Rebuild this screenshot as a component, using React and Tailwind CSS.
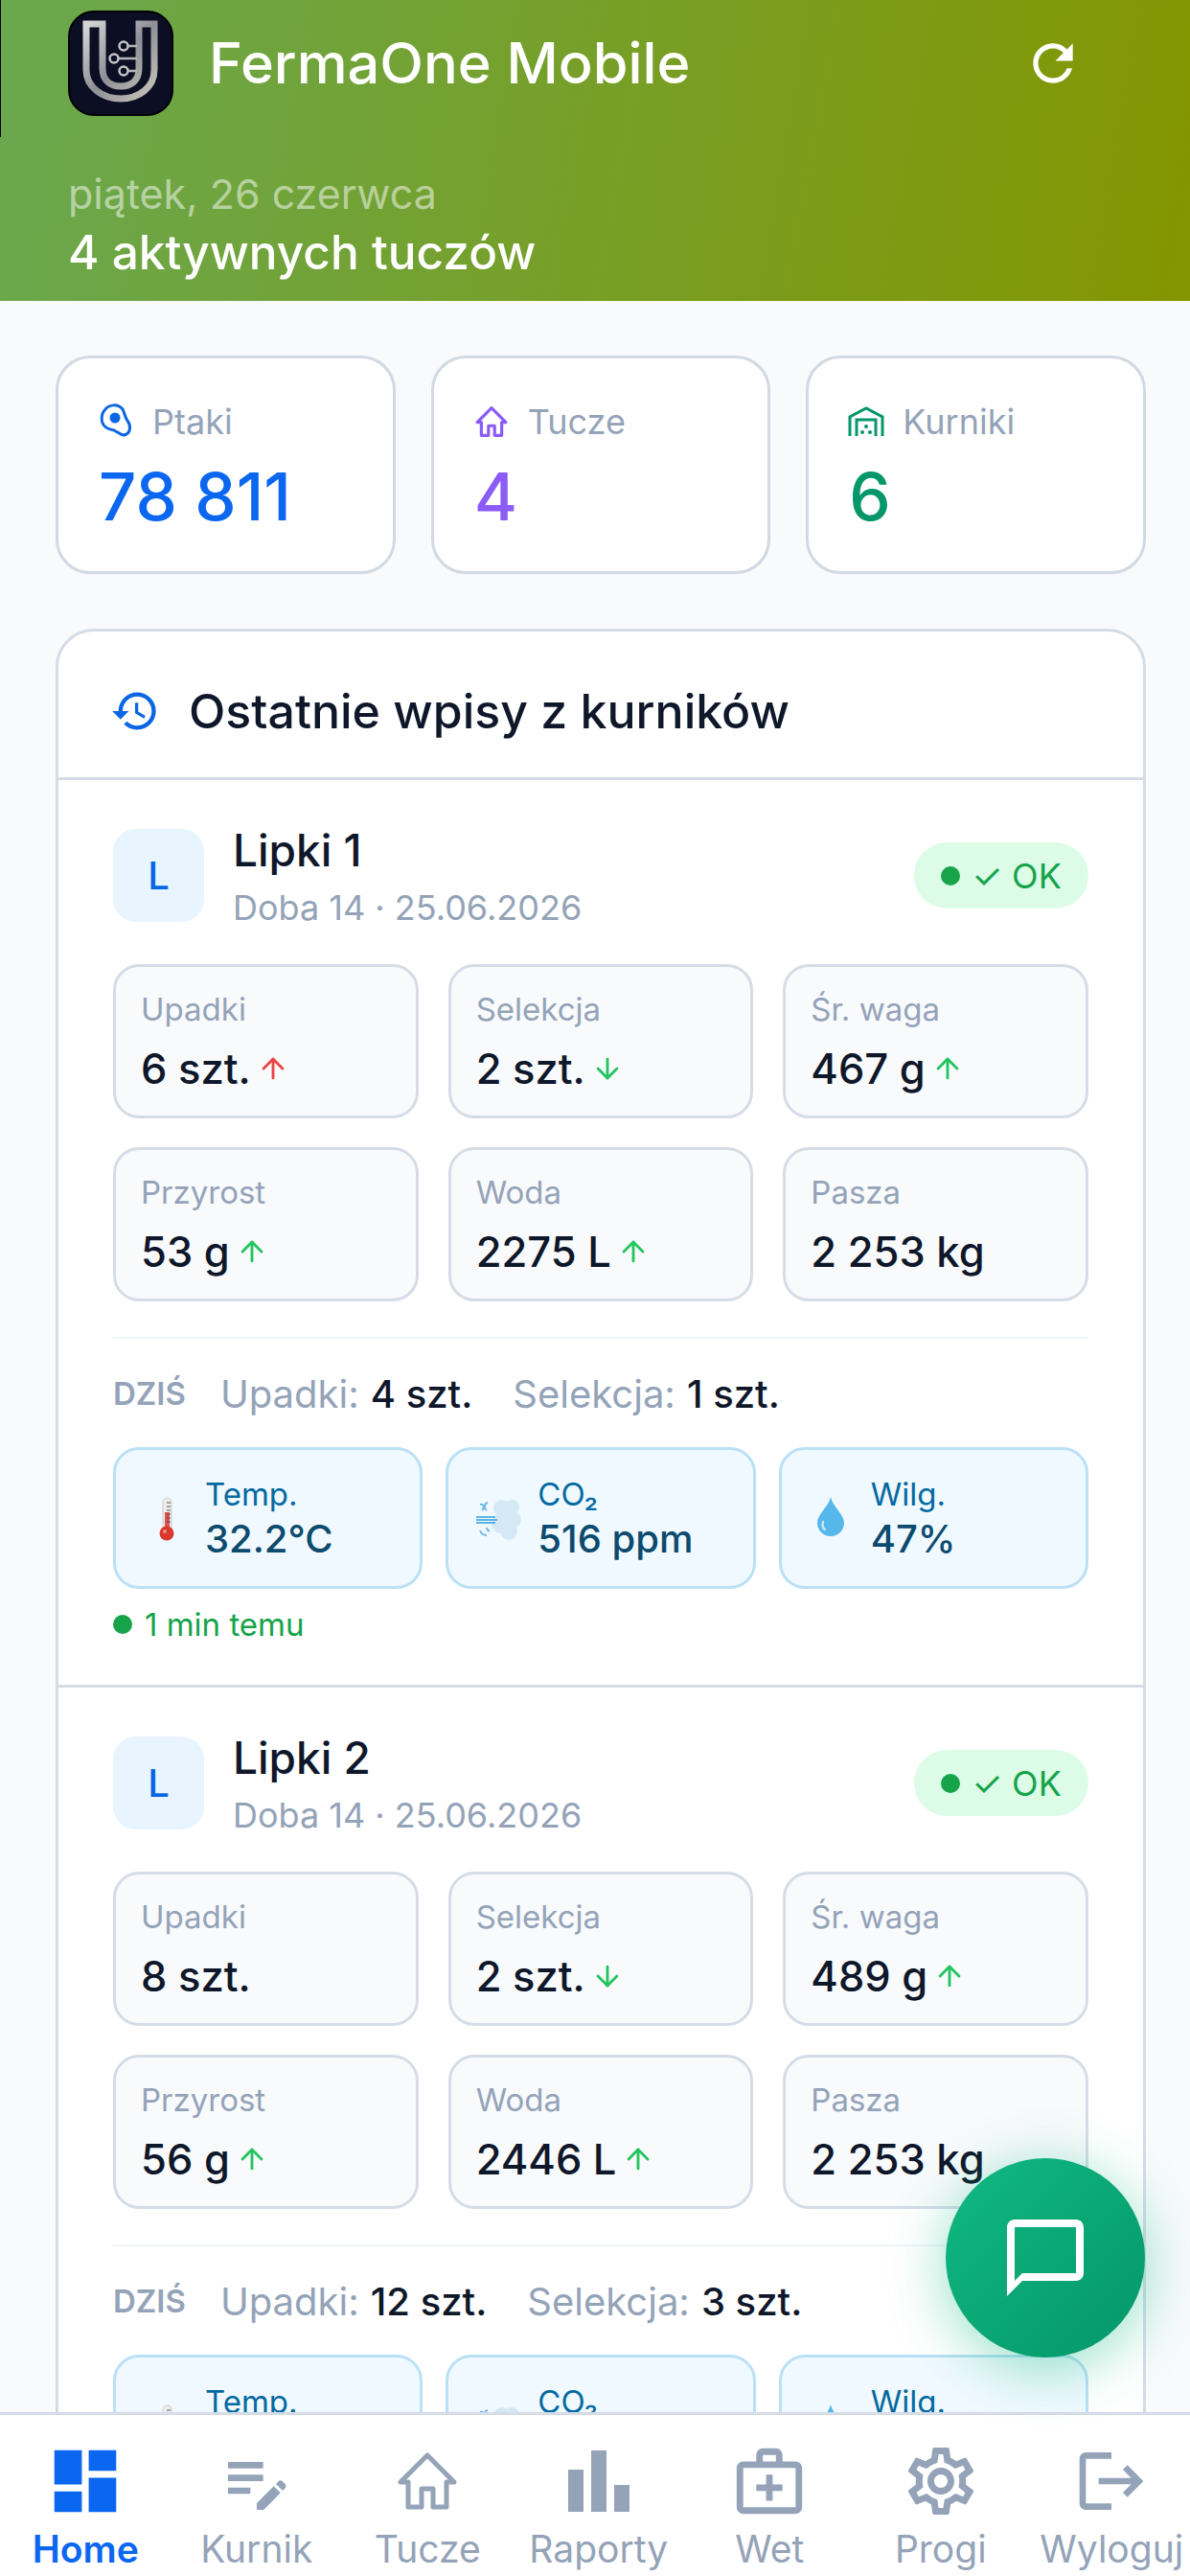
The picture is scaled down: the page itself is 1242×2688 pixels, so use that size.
import { MdDashboard, MdEditNote, MdBarChart, MdOutlineMedicalServices, MdOutlineSettings, MdLogout, MdRefresh, MdHistory, MdOutlineChatBubbleOutline } from "react-icons/md";
import { ArrowUp, ArrowDown } from "lucide-react";

const Logo = () => (
  <svg viewBox="0 0 110 110" className="w-[110px] h-[110px] shrink-0">
    <defs>
      <linearGradient id="silver" x1="0" y1="0" x2="1" y2="1">
        <stop offset="0" stopColor="#d6d6d6" />
        <stop offset="0.5" stopColor="#8f9096" />
        <stop offset="1" stopColor="#c9c5bc" />
      </linearGradient>
    </defs>
    <rect x="1" y="1" width="108" height="108" rx="26" fill="#0c0f24" stroke="#000" strokeWidth="2" />
    <path d="M19 14H36V60C36 73 44 79 55 79C66 79 74 73 74 60V14H90V62C90 80 74 92 55 92C36 92 19 80 19 62Z" fill="none" stroke="url(#silver)" strokeWidth="7" />
    <path d="M58 37H72M48 50H72M58 63H72" stroke="#b5b5b8" strokeWidth="2.5" fill="none" />
    <circle cx="58" cy="37" r="4.5" fill="#0c0f24" stroke="#c4c4c6" strokeWidth="2.5" />
    <circle cx="48" cy="50" r="4.5" fill="#0c0f24" stroke="#c4c4c6" strokeWidth="2.5" />
    <circle cx="58" cy="63" r="4.5" fill="#0c0f24" stroke="#c4c4c6" strokeWidth="2.5" />
  </svg>
);

const Egg = () => (
  <svg viewBox="0 0 36 38" className="w-[36px] h-[38px] shrink-0 text-[#0b66e4]">
    <path d="M7 6C11 1 20 0 25 6C27 9 27 14 30 18C34 23 33 30 29 32C25 35 20 30 16 28C10 27 5 25 3.5 19C2.5 14 4 9 7 6Z" fill="none" stroke="currentColor" strokeWidth="3" />
    <circle cx="17" cy="15" r="5.5" fill="currentColor" />
  </svg>
);

const House = ({ className, strokeWidth = 3 }) => (
  <svg viewBox="0 0 64 60" className={className}>
    <path d="M32 3L4 31H12V57H26V38H38V57H52V31H60Z" fill="none" stroke="currentColor" strokeWidth={strokeWidth} strokeLinejoin="round" />
  </svg>
);

const Barn = () => (
  <svg viewBox="0 0 38 32" className="w-[38px] h-[32px] shrink-0 text-[#059669]">
    <path d="M2 31V11L19 2L36 11V31" fill="none" stroke="currentColor" strokeWidth="3" />
    <path d="M9 31V14H29V31" fill="none" stroke="currentColor" strokeWidth="3" />
    <circle cx="19" cy="21" r="2" fill="currentColor" />
    <circle cx="15" cy="27" r="2" fill="currentColor" />
    <circle cx="23" cy="27" r="2" fill="currentColor" />
  </svg>
);

const Thermometer = () => (
  <svg viewBox="0 0 56 48" className="w-[56px] h-[48px] shrink-0">
    <rect x="24" y="3" width="9" height="38" rx="4.5" fill="#f1eded" stroke="#cfc9c9" />
    <rect x="26" y="18" width="5" height="22" fill="#d9534a" />
    <path d="M28 8h4M28 12h4M28 16h4M28 20h4M28 24h4M28 28h4" stroke="#55555a" strokeWidth="1.2" />
    <circle cx="28" cy="40" r="7.5" fill="#d8392c" />
    <circle cx="26" cy="38" r="2" fill="#ef8f86" />
  </svg>
);

const WindCloud = () => (
  <svg viewBox="0 0 56 48" className="w-[56px] h-[48px] shrink-0">
    <g fill="#d5e8f5">
      <circle cx="31" cy="14" r="9" />
      <circle cx="41" cy="13" r="8" />
      <circle cx="43" cy="26" r="8" />
      <circle cx="38" cy="38" r="9" />
      <circle cx="29" cy="31" r="9" />
      <circle cx="34" cy="24" r="10" />
    </g>
    <path d="M4 23H24M4 26H26M4 29H24" stroke="#5cb4e6" strokeWidth="2.2" fill="none" />
    <path d="M8 10c4-1 5 3 2 6M16 8c-4 1-4 6-1 8M8 37c1 3 4 5 7 5M15 34c0 2 1 3 3 4" stroke="#6fbbe8" strokeWidth="2" fill="none" />
  </svg>
);

const Drop = () => (
  <svg viewBox="0 0 56 48" className="w-[56px] h-[48px] shrink-0">
    <path d="M26 2C24 12 12 20 12 29a14 14 0 0 0 28 0C40 20 28 12 26 2Z" fill="#55b7ea" />
    <path d="M18 28c-1 4 0 7 2 8" stroke="#c6e8f9" strokeWidth="2.5" fill="none" strokeLinecap="round" />
  </svg>
);

const Stat = ({ icon, label, value, color }) => (
  <div className="flex-1 h-[228px] bg-white border-[3px] border-[#d1d9e3] rounded-[36px] pl-[42px] pt-[46px]">
    <div className="flex items-center h-[40px]">
      <span className="w-[36px] flex justify-center">{icon}</span>
      <span className="ml-[20px] text-[36px] text-[#94a3b8]">{label}</span>
    </div>
    <div className={`text-[69px] leading-[80px] mt-[18px] font-medium ${color}`}>{value}</div>
  </div>
);

const trend = {
  red: <ArrowUp size={34} strokeWidth={2} className="text-[#ef4444]" />,
  down: <ArrowDown size={34} strokeWidth={2} className="text-[#22c55e]" />,
  up: <ArrowUp size={34} strokeWidth={2} className="text-[#22c55e]" />,
};

const Metric = ({ label, value, t }) => (
  <div className="h-[161px] bg-[#f8fafc] border-[3px] border-[#d5dce6] rounded-[27px] pl-[26px] pt-[24px]">
    <div className="text-[33px] leading-[40px] text-[#94a3b8]">{label}</div>
    <div className="flex items-center gap-[6px] mt-[17px] text-[43.5px] leading-[50px] font-medium text-[#0f172a]">
      {value}
      {t && trend[t]}
    </div>
  </div>
);

const Sensor = ({ icon, label, value }) => (
  <div className="flex-1 h-[148px] bg-[#f0f9ff] border-[3px] border-[#bae0f5] rounded-[27px] flex items-center pl-[25px] gap-[12px]">
    {icon}
    <div>
      <div className="text-[33px] leading-[44px] text-[#0369a1]">{label}</div>
      <div className="text-[40px] leading-[50px] font-medium text-[#0c4a6e]">{value}</div>
    </div>
  </div>
);

const Entry = ({ name, metrics, ups, sel }) => (
  <div className="px-[57px] pt-[48px] border-b-[3px] border-[#d5dce6] h-[947px]">
    <div className="flex justify-between h-[107px]">
      <div className="flex gap-[30px]">
        <div className="mt-[3px] w-[95px] h-[97px] rounded-[24px] bg-[#e8f4fe] flex items-center justify-center text-[40px] font-medium text-[#0b66e4]">L</div>
        <div>
          <div className="text-[46px] leading-[50px] font-medium text-[#0f172a]">{name}</div>
          <div className="text-[36px] leading-[44px] mt-[13px] text-[#94a3b8]">Doba 14 · 25.06.2026</div>
        </div>
      </div>
      <div className="mt-[17px] w-[182px] h-[69px] rounded-full bg-[#dcfce7] flex items-center justify-center gap-[12px] text-[36px] text-[#16a34a]">
        <span className="w-[20px] h-[20px] rounded-full bg-[#16a34a]"></span>
        <span>✓ OK</span>
      </div>
    </div>
    <div className="grid grid-cols-3 gap-x-[31px] gap-y-[30px] mt-[37px]">
      {metrics.map((m) => <Metric key={m.label} {...m} />)}
    </div>
    <div className="h-[2px] bg-[#f1f5f9] mt-[37px]"></div>
    <div className="flex items-center mt-[36px] h-[44px] text-[40px] text-[#94a3b8]">
      <span className="text-[33px] font-semibold mr-[36px]">DZIŚ</span>
      <span>Upadki:</span>
      <span className="ml-[12px] font-medium text-[#0f172a]">{ups}</span>
      <span className="ml-[42px]">Selekcja:</span>
      <span className="ml-[12px] font-medium text-[#0f172a]">{sel}</span>
    </div>
    <div className="flex gap-[24px] mt-[33px]">
      <Sensor icon={<Thermometer />} label="Temp." value="32.2°C" />
      <Sensor icon={<WindCloud />} label="CO₂" value="516 ppm" />
      <Sensor icon={<Drop />} label="Wilg." value="47%" />
    </div>
    <div className="flex items-center gap-[13px] mt-[17px] text-[33px] leading-[40px] text-[#16a34a]">
      <span className="w-[20px] h-[20px] rounded-full bg-[#16a34a]"></span>
      1 min temu
    </div>
  </div>
);

const NavItem = ({ icon, label, active }) => (
  <div className={`w-[178.5px] shrink-0 flex flex-col items-center ${active ? "text-[#0b66f0]" : "text-[#94a3b8]"}`}>
    <div className="h-[80px] flex items-center justify-center">{icon}</div>
    <span className={`text-[39px] leading-[44px] mt-[9px] whitespace-nowrap ${active ? "font-semibold" : ""}`}>{label}</span>
  </div>
);

const App = () => {
  const lipki1 = [
    { label: "Upadki", value: "6 szt.", t: "red" },
    { label: "Selekcja", value: "2 szt.", t: "down" },
    { label: "Śr. waga", value: "467 g", t: "up" },
    { label: "Przyrost", value: "53 g", t: "up" },
    { label: "Woda", value: "2275 L", t: "up" },
    { label: "Pasza", value: "2 253 kg" },
  ];
  const lipki2 = [
    { label: "Upadki", value: "8 szt." },
    { label: "Selekcja", value: "2 szt.", t: "down" },
    { label: "Śr. waga", value: "489 g", t: "up" },
    { label: "Przyrost", value: "56 g", t: "up" },
    { label: "Woda", value: "2446 L", t: "up" },
    { label: "Pasza", value: "2 253 kg" },
  ];

  return (
    <div className="relative w-[1242px] h-[2688px] overflow-hidden flex flex-col bg-[#f8fafc] font-['Inter',sans-serif]">
      <header className="h-[314px] shrink-0 bg-[linear-gradient(100deg,#6aa84f,#849600)] pl-[71px] pr-[112px] text-white">
        <div className="flex items-center justify-between pt-[11px]">
          <div className="flex items-center gap-[37px]">
            <Logo />
            <span className="text-[59.5px] font-medium">FermaOne Mobile</span>
          </div>
          <MdRefresh className="text-[62px]" />
        </div>
        <div className="text-[43px] leading-[46px] mt-[58px] text-white/50">piątek, 26 czerwca</div>
        <div className="text-[49.5px] leading-[60px] mt-[8px] font-medium">4 aktywnych tuczów</div>
      </header>

      <main className="flex-1 min-h-0 overflow-hidden pl-[58px] pr-[46px] pt-[57px]">
        <div className="flex gap-[37px]">
          <Stat icon={<Egg />} label="Ptaki" value="78 811" color="text-[#0b66f0]" />
          <Stat icon={<House className="w-[34px] h-[32px] text-[#8b5cf6]" strokeWidth={6} />} label="Tucze" value="4" color="text-[#8b5cf6]" />
          <Stat icon={<Barn />} label="Kurniki" value="6" color="text-[#059669]" />
        </div>
        <section className="mt-[57px] bg-white border-[3px] border-[#d5dce6] rounded-[40px]">
          <div className="h-[155px] flex items-center gap-[30px] pl-[54px] pt-[14px] border-b-[3px] border-[#d5dce6]">
            <MdHistory className="text-[52px] text-[#0b66e4]" />
            <h2 className="text-[50px] font-medium text-[#0f172a]">Ostatnie wpisy z kurników</h2>
          </div>
          <Entry name="Lipki 1" metrics={lipki1} ups="4 szt." sel="1 szt." />
          <Entry name="Lipki 2" metrics={lipki2} ups="12 szt." sel="3 szt." />
        </section>
      </main>

      <nav className="h-[171px] shrink-0 bg-white border-t-[3px] border-[#d5dce6] flex pt-[29px] relative z-10">
        <NavItem icon={<MdDashboard className="text-[86px]" />} label="Home" active />
        <NavItem icon={<MdEditNote className="text-[80px]" />} label="Kurnik" />
        <NavItem icon={<House className="w-[64px] h-[60px]" strokeWidth={5} />} label="Tucze" />
        <NavItem icon={<MdBarChart className="text-[96px]" />} label="Raporty" />
        <NavItem icon={<MdOutlineMedicalServices className="text-[82px]" />} label="Wet" />
        <NavItem icon={<MdOutlineSettings className="text-[84px]" />} label="Progi" />
        <NavItem icon={<MdLogout className="text-[80px]" />} label="Wyloguj" />
      </nav>

      <button className="absolute left-[987px] top-[2252px] w-[208px] h-[208px] rounded-full bg-gradient-to-br from-[#10b981] to-[#059669] shadow-[0_10px_60px_rgba(16,185,129,0.45)] flex items-center justify-center text-white z-20">
        <MdOutlineChatBubbleOutline className="text-[96px]" />
      </button>
      <div className="absolute left-0 top-0 w-px h-[143px] bg-black"></div>
    </div>
  );
};

export default App;
